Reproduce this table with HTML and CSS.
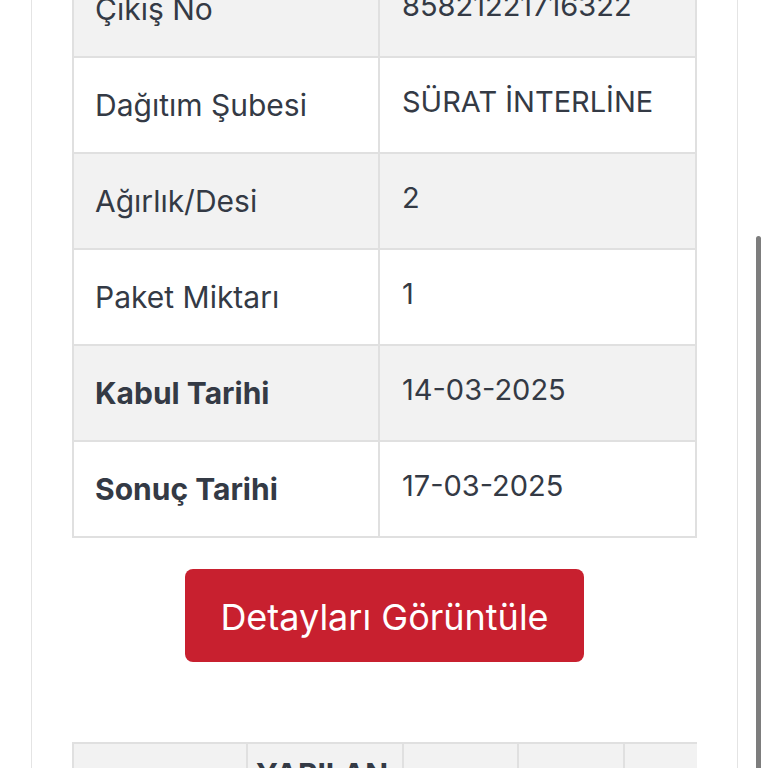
FILE: index.html
```html
<!DOCTYPE html>
<html lang="tr">
<head>
<meta charset="utf-8">
<link rel="stylesheet" href="styles.css">
</head>
<body>
<div class="page">
  <div class="card">
    <table class="info">
      <tr class="odd"><td class="label">Çıkış No</td><td class="value">85821221716322</td></tr>
      <tr><td class="label">Dağıtım Şubesi</td><td class="value">SÜRAT İNTERLİNE</td></tr>
      <tr class="odd"><td class="label">Ağırlık/Desi</td><td class="value">2</td></tr>
      <tr><td class="label">Paket Miktarı</td><td class="value">1</td></tr>
      <tr class="odd"><td class="label strong">Kabul Tarihi</td><td class="value">14-03-2025</td></tr>
      <tr><td class="label strong">Sonuç Tarihi</td><td class="value">17-03-2025</td></tr>
    </table>
    <div class="actions">
      <button class="btn">Detayları Görüntüle</button>
    </div>
    <div class="scroll-wrap">
      <table class="moves">
        <tr>
          <th class="c1">TARİH</th>
          <th class="c2">YAPILAN İŞLEM</th>
          <th class="c3">ŞUBE</th>
          <th class="c4">SAAT</th>
          <th class="c5">AÇIKLAMA</th>
        </tr>
      </table>
    </div>
  </div>
</div>
<div class="scrollbar"></div>
</body>
</html>
```
FILE: styles.css
```css
html, body {
  margin: 0;
  padding: 0;
  background: #ffffff;
  overflow: hidden;
}
body {
  font-family: Inter, "Noto Sans", "Liberation Sans", sans-serif;
  color: #343a45;
  height: 768px;
  position: relative;
}
.page {
  margin-top: -40px;
  padding-left: 31px;
}
.card {
  width: 707px;
  border-left: 1px solid #e4e4e4;
  border-right: 1px solid #e4e4e4;
  padding: 0 40px 0 40px;
  box-sizing: border-box;
  min-height: 900px;
}
.info {
  width: 625px;
  border-collapse: collapse;
  border: 2px solid #e0e0e0;
}
.info td {
  border: 2px solid #e0e0e0;
  height: 96px;
  vertical-align: middle;
  box-sizing: border-box;
}
.info tr.odd td {
  background: #f2f2f2;
}
.info .label {
  width: 306px;
  padding: 0 0 0 21px;
  font-size: 30px;
}
.info .value {
  padding: 0 0 7px 22px;
  font-size: 29px;
}
.info .strong {
  font-weight: 700;
}
.actions {
  display: flex;
  justify-content: center;
  padding-top: 31px;
}
.btn {
  width: 399px;
  height: 93px;
  border: none;
  border-radius: 8px;
  background: #c8202f;
  color: #ffffff;
  font-family: Inter, "Noto Sans", "Liberation Sans", sans-serif;
  font-size: 36px;
  padding: 2px 0 0 0;
}
.scroll-wrap {
  margin-top: 80px;
  width: 625px;
  overflow: hidden;
}
.moves {
  border-collapse: collapse;
  border: 2px solid #e0e0e0;
  table-layout: fixed;
  width: 750px;
}
.moves th {
  background: #f2f2f2;
  border: 2px solid #e0e0e0;
  height: 100px;
  font-size: 30px;
  font-weight: 700;
  text-align: left;
  vertical-align: top;
  padding: 12px 8px 0 8px;
  color: #343a45;
}
.moves .c1 { width: 156px; color: transparent; }
.moves .c2 { width: 138px; }
.moves .c3 { width: 97px; color: transparent; }
.moves .c4 { width: 88px; color: transparent; }
.moves .c5 { width: 180px; color: transparent; }
.scrollbar {
  position: absolute;
  left: 756px;
  top: 236px;
  width: 5px;
  height: 560px;
  border-radius: 3px;
  background: #7d7d7d;
}
```
